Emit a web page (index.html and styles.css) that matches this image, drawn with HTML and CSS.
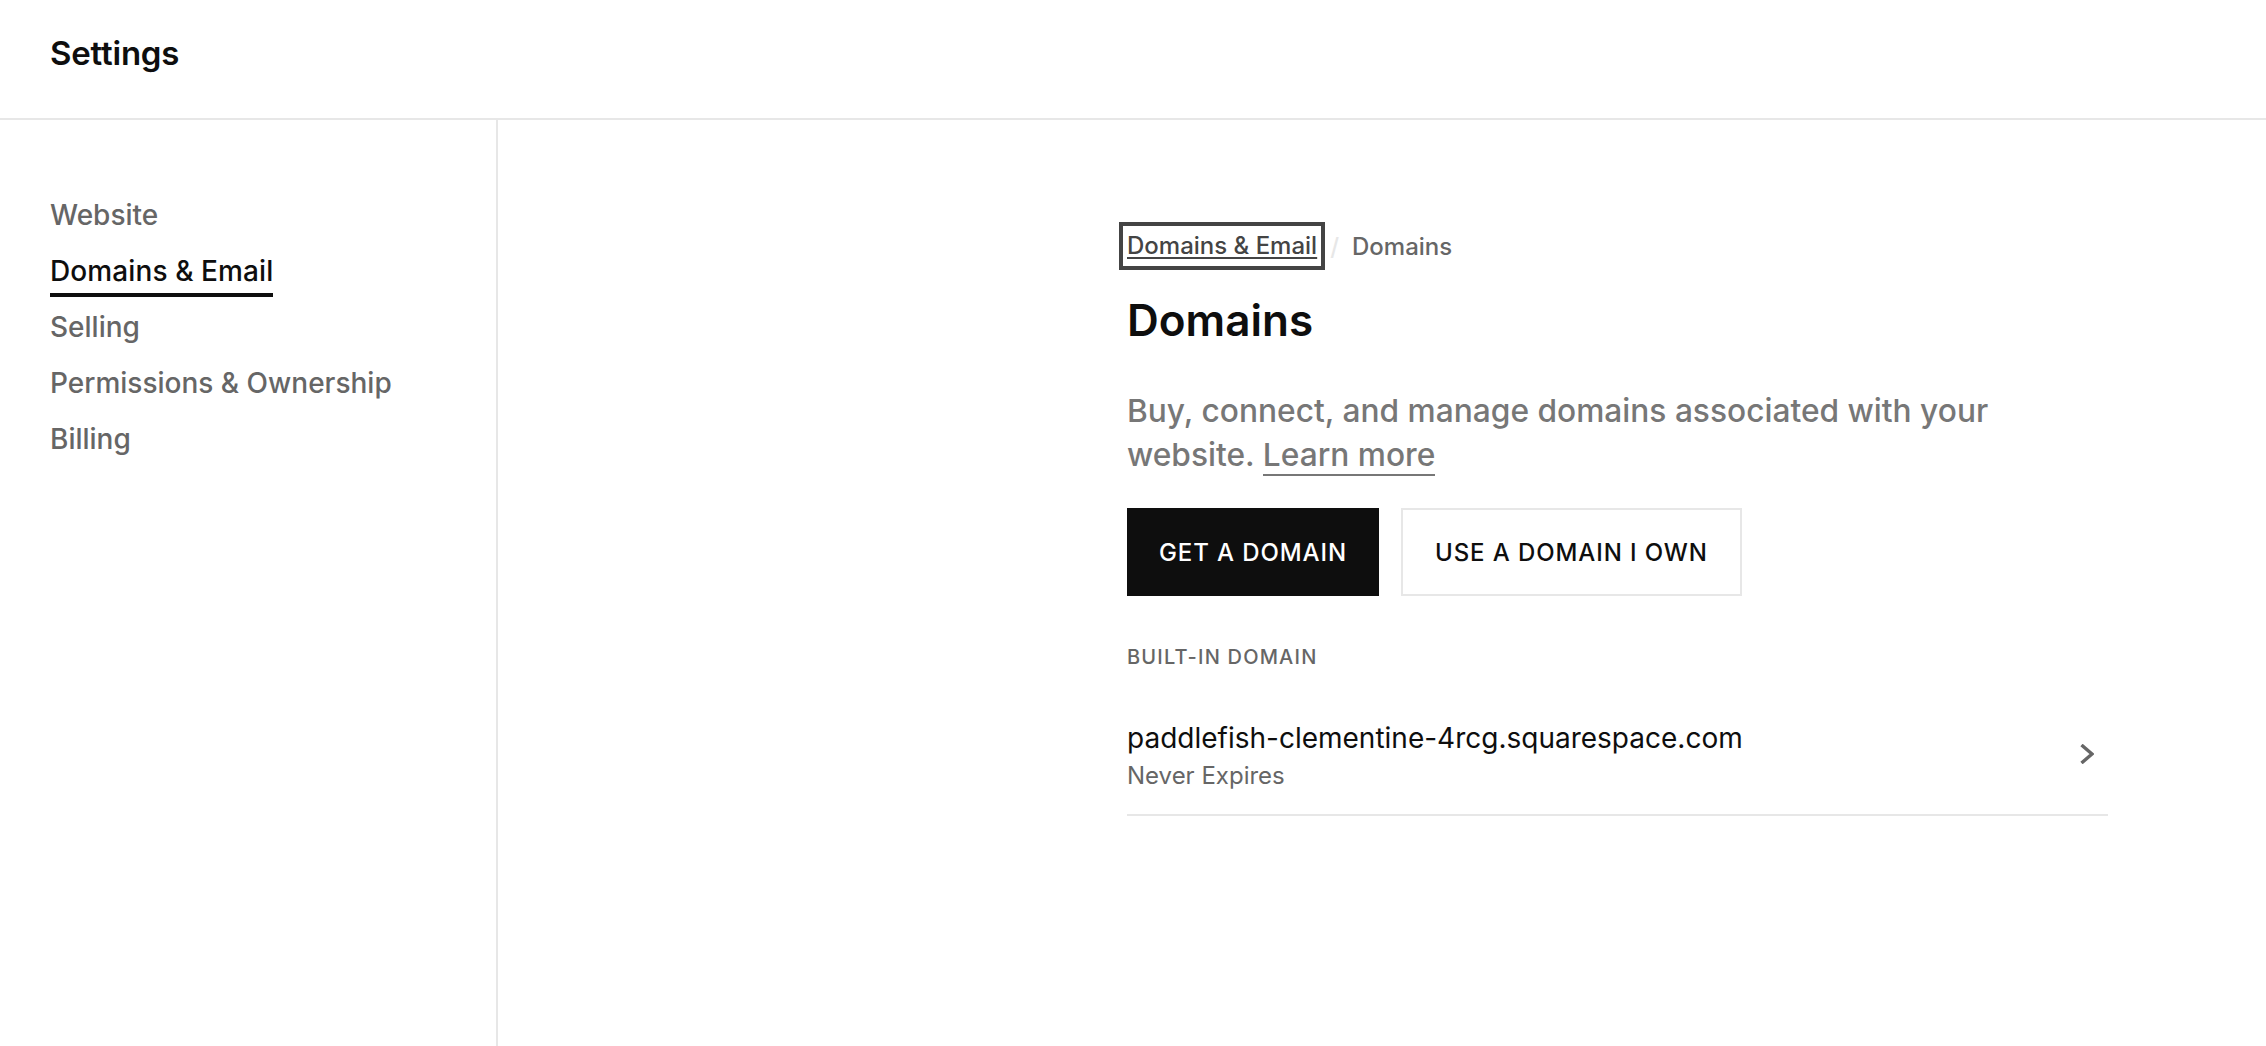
FILE: index.html
```html
<!DOCTYPE html>
<html lang="en">
<head>
    <meta charset="UTF-8">
    <meta name="viewport" content="width=device-width, initial-scale=1.0">
    <title>Settings - Domains</title>
    <link rel="stylesheet" href="styles.css">
</head>
<body>
    <!-- Top bar -->
    <header class="topbar">
        <h1 class="topbar-title">Settings</h1>
    </header>

    <div class="layout">
        <!-- Left menu -->
        <nav class="sidebar">
            <a class="nav-item" href="#">Website</a>
            <a class="nav-item active" href="#">Domains &amp; Email</a>
            <a class="nav-item" href="#">Selling</a>
            <a class="nav-item" href="#">Permissions &amp; Ownership</a>
            <a class="nav-item" href="#">Billing</a>
        </nav>

        <!-- Domains panel -->
        <main class="content">
            <div class="breadcrumb">
                <a class="crumb-link" href="#">Domains &amp; Email</a>
                <span class="crumb-sep">/</span>
                <span class="crumb-current">Domains</span>
            </div>
            <h2 class="page-title">Domains</h2>
            <p class="page-desc">Buy, connect, and manage domains associated with your website. <a class="learn-more" href="#">Learn more</a></p>
            <div class="actions">
                <a class="btn btn-primary" href="#">GET A DOMAIN</a>
                <a class="btn btn-outline" href="#">USE A DOMAIN I OWN</a>
            </div>
            <div class="section-label">BUILT-IN DOMAIN</div>
            <a class="domain-row" href="#">
                <div class="domain-info">
                    <div class="domain-name">paddlefish-clementine-4rcg.squarespace.com</div>
                    <div class="domain-meta">Never Expires</div>
                </div>
                <svg class="chevron" viewBox="0 0 14 20" width="14" height="20" aria-hidden="true">
                    <path d="M1.5 1 L12 10 L1.5 19" fill="none" stroke="#666" stroke-width="3.4"/>
                </svg>
            </a>
        </main>
    </div>
</body>
</html>
```

FILE: styles.css
```css
* {
    box-sizing: border-box;
}

html, body {
    height: 100%;
}

body {
    margin: 0;
    display: flex;
    flex-direction: column;
    background: #fff;
    color: #0e0e0e;
    font-family: "Inter", "Liberation Sans", sans-serif;
}

a {
    color: inherit;
    text-decoration: none;
}

.topbar {
    height: 120px;
    flex: none;
    display: flex;
    align-items: center;
    padding: 0 50px 13px;
    border-bottom: 2px solid #e7e7e7;
}

.topbar-title {
    margin: 0;
    font-size: 33px;
    font-weight: 600;
    letter-spacing: -0.2px;
}

.layout {
    flex: 1;
    display: flex;
}

.sidebar {
    width: 498px;
    flex: none;
    display: flex;
    flex-direction: column;
    align-items: flex-start;
    gap: 16px;
    padding: 73px 0 0 50px;
    border-right: 2px solid #e7e7e7;
}

.nav-item {
    height: 40px;
    line-height: 44px;
    font-size: 28px;
    font-weight: 500;
    color: #666;
}

.nav-item.active {
    height: 48px;
    margin-bottom: -8px;
    color: #0e0e0e;
    letter-spacing: 0.1px;
    border-bottom: 4px solid #0e0e0e;
}

.content {
    width: 981px;
    margin-left: 629px;
    padding-top: 102px;
}

.breadcrumb {
    display: flex;
    align-items: center;
    height: 48px;
    font-size: 24px;
    font-weight: 500;
}

.crumb-link {
    line-height: 32px;
    color: #444;
    text-decoration: underline;
    text-decoration-thickness: 2px;
    text-underline-offset: 3px;
    outline: 4px solid #444;
    outline-offset: 4px;
}

.crumb-sep {
    margin: 0 13px 0 13px;
    color: #e7e7e7;
}

.crumb-current {
    color: #666;
}

.page-title {
    margin: 0;
    padding-top: 20px;
    font-size: 44px;
    font-weight: 600;
    line-height: 60px;
}

.page-desc {
    margin: 0;
    padding-top: 39px;
    max-width: 900px;
    font-size: 31.7px;
    line-height: 44px;
    color: #777;
    font-weight: 500;
}

.learn-more {
    border-bottom: 2px solid #777;
}

.actions {
    display: flex;
    gap: 22px;
    margin-top: 31px;
}

.btn {
    height: 88px;
    display: flex;
    align-items: center;
    padding: 0 32px;
    font-size: 24px;
    font-weight: 500;
    letter-spacing: 0.9px;
}

.btn-primary {
    background: #0e0e0e;
    color: #fff;
}

.btn-outline {
    border: 2px solid #e7e7e7;
    color: #0e0e0e;
}

.section-label {
    margin-top: 49px;
    font-size: 20px;
    font-weight: 500;
    line-height: 24px;
    letter-spacing: 1.2px;
    color: #666;
}

.domain-row {
    display: flex;
    align-items: center;
    justify-content: space-between;
    margin-top: 50px;
    padding: 0 14px 19px 0;
    border-bottom: 2px solid #e7e7e7;
}

.domain-name {
    font-size: 28px;
    line-height: 38px;
}

.domain-meta {
    font-size: 24px;
    line-height: 38px;
    color: #666;
}

.chevron {
    display: block;
    margin-bottom: 6px;
}
```
